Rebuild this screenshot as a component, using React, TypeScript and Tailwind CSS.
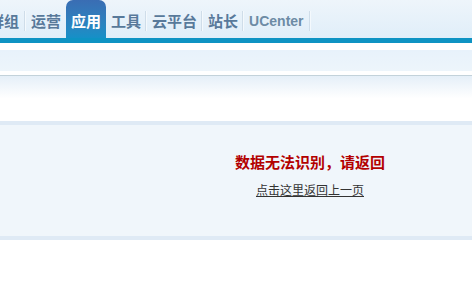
import React from "react";

const cjk = { fontFamily: '"Noto Sans CJK SC", "Noto Sans", sans-serif' };

function Sep() {
  return <div className="h-[20px] w-[2px] border-l border-l-[#cfdde9] border-r border-r-[#f4f9fd] mt-[4px]" />;
}

function Item({ label, ascii, tight }: { label: string; ascii?: boolean; tight?: boolean }) {
  return (
    <div
      className={`h-[38px] flex items-center pt-[4px] pl-[5px] ${tight ? "pr-[4px]" : "pr-[5px]"} font-bold text-[#58799a] ${ascii ? "text-[14px]" : "text-[15px]"}`}
      style={ascii ? { fontFamily: '"Liberation Sans", Arial, sans-serif', color: "#6d8ba5" } : cjk}
    >
      {label}
    </div>
  );
}

export default function App() {
  return (
    <div className="w-[472px] h-[293px] overflow-hidden bg-white">
      {/* top nav */}
      <div className="h-[38px] bg-gradient-to-b from-[#eef5fb] to-[#e0eef9] flex items-center overflow-hidden">
        <div className="flex items-center -ml-[16px]">
          <Item label="群组" />
          <Sep />
          <Item label="运营" />
          <div
            className="h-[38px] px-[5px] flex items-center pt-[4px] rounded-t-[7px] bg-gradient-to-b from-[#3a6db3] to-[#1590c7] text-white font-bold text-[15px]"
            style={cjk}
          >
            应用
          </div>
          <Item label="工具" tight />
          <Sep />
          <Item label="云平台" tight />
          <Sep />
          <Item label="站长" tight />
          <Sep />
          <Item label="UCenter" ascii />
          <Sep />
        </div>
      </div>
      <div className="h-[5px] bg-[#0e93c3]" />
      <div className="h-[7px] bg-white" />
      <div className="h-[21px] bg-gradient-to-b from-[#e8f2fb] to-[#edf5fb]" />
      <div className="h-[4px] bg-white" />
      <div className="h-[1px] bg-[#c3d2da]" />
      <div className="h-[45px] bg-gradient-to-b from-[#e5eff8] via-white to-white" />
      {/* message box */}
      <div className="border-y-4 border-[#dfeaf5] bg-[#f0f6fb] h-[119px] flex flex-col items-center pl-[148px] pt-[27px]">
        <div className="text-[15px] leading-[20px] font-bold text-[#b30000]" style={cjk}>
          数据无法识别，请返回
        </div>
        <a
          href="#"
          className="mt-[10px] text-[12px] leading-[16px] text-[#333] underline"
          style={cjk}
        >
          点击这里返回上一页
        </a>
      </div>
    </div>
  );
}
